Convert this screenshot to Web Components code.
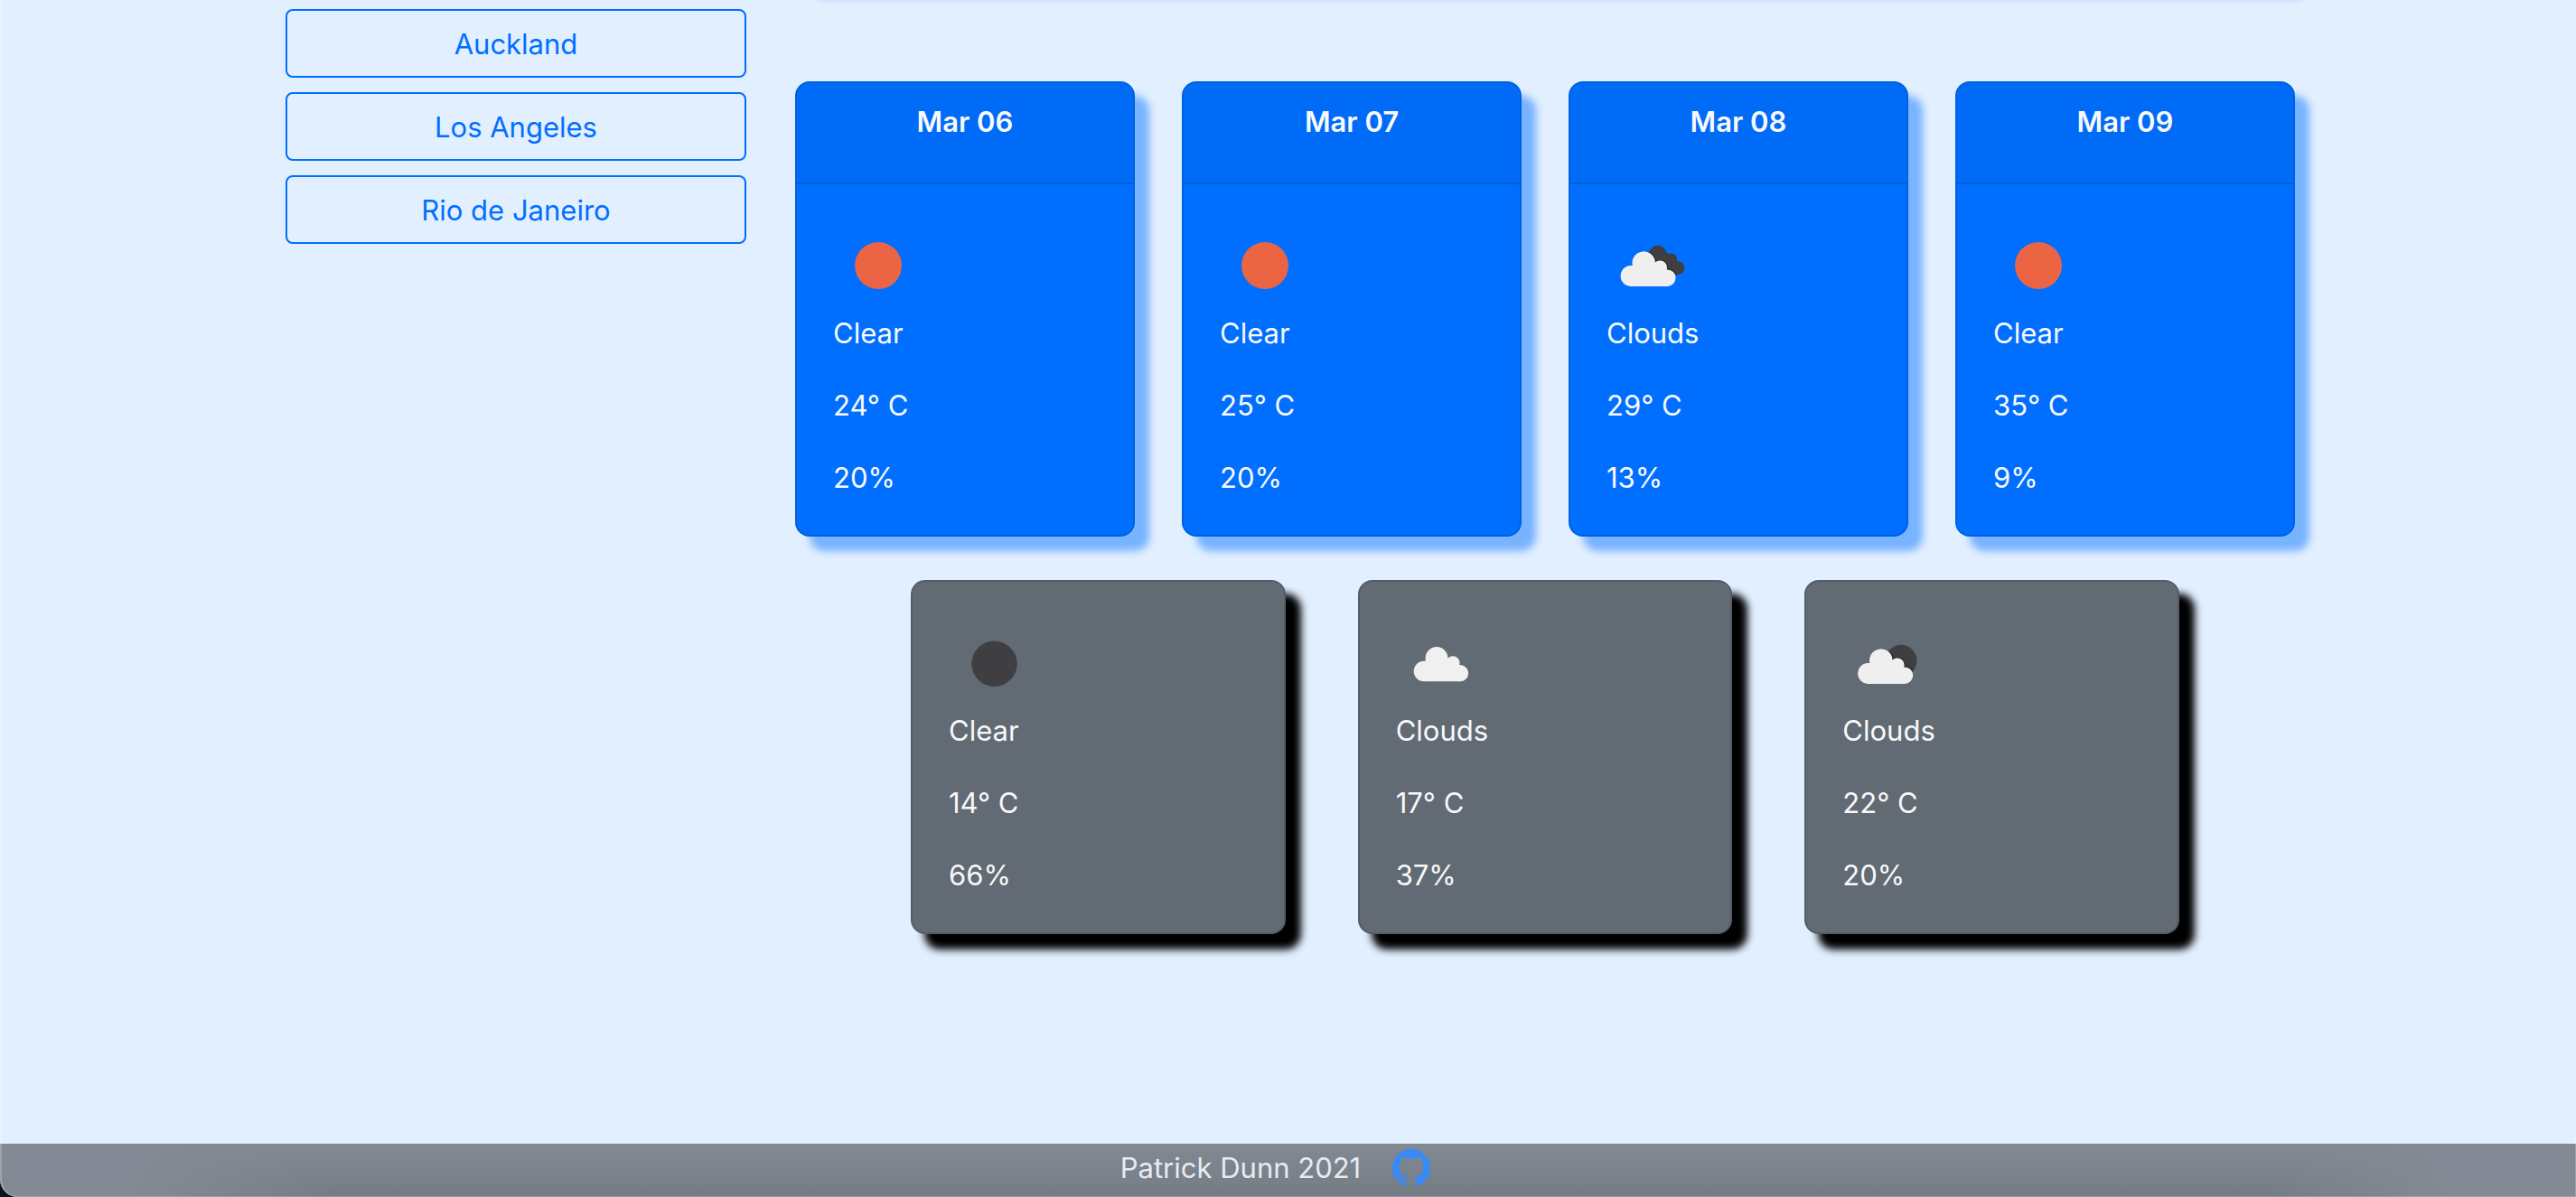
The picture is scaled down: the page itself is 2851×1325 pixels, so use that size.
<!DOCTYPE html>
<html lang="en">
<head>
<meta charset="utf-8">
<title>Weather forecast</title>
<style>
  html { background: #07131d; }
  body {
    margin: 0;
    font-family: Inter, "Liberation Sans", sans-serif;
    font-size: 31px;
    line-height: 48px;
    color: #f8f9fa;
  }
</style>
</head>
<body>
<weather-page>
  <city-list slot="cities">
    <city-button>Auckland</city-button>
    <city-button>Los Angeles</city-button>
    <city-button>Rio de Janeiro</city-button>
  </city-list>
  <current-panel></current-panel>
  <card-row>
    <weather-card heading="Mar 06" icon="sun" sky="Clear" temp="24° C" humidity="20%"></weather-card>
    <weather-card heading="Mar 07" icon="sun" sky="Clear" temp="25° C" humidity="20%"></weather-card>
    <weather-card heading="Mar 08" icon="broken" sky="Clouds" temp="29° C" humidity="13%"></weather-card>
    <weather-card heading="Mar 09" icon="sun" sky="Clear" temp="35° C" humidity="9%"></weather-card>
  </card-row>
  <card-row inset>
    <weather-card tone="night" icon="moon" sky="Clear" temp="14° C" humidity="66%"></weather-card>
    <weather-card tone="night" icon="cloud" sky="Clouds" temp="17° C" humidity="37%"></weather-card>
    <weather-card tone="night" icon="few" sky="Clouds" temp="22° C" humidity="20%"></weather-card>
  </card-row>
  <page-footer slot="footer">Patrick Dunn 2021</page-footer>
</weather-page>

<script>
const define = (name, render) => customElements.define(name, class extends HTMLElement {
  connectedCallback() {
    if (this.shadowRoot) return;
    this.attachShadow({ mode: 'open' }).innerHTML = render(this);
  }
});

define('weather-page', () => `
  <style>
    :host {
      display: flex; flex-direction: column; position: relative;
      min-height: 100vh; background: #e2efff;
      border-bottom-left-radius: 20px; overflow: hidden;
    }
    /* thin light rim of the window */
    :host::after {
      content: ""; position: absolute; inset: 0; pointer-events: none;
      border: solid rgba(255,255,255,.22); border-width: 0 1px 1px 2px;
      border-bottom-left-radius: 20px;
    }
    main { padding: 0 1px 0 2px; }
    .container {
      display: grid; grid-template-columns: 1fr 3fr;
      max-width: 2280px; margin: 0 auto;
    }
    aside { padding: 10px 30px 0; }
    section { display: flex; flex-direction: column; gap: 48px; padding: 0 26px 0 24px; min-width: 0; }
    .foot { margin-top: auto; }
  </style>
  <main><div class="container">
    <aside><slot name="cities"></slot></aside>
    <section><slot></slot></section>
  </div></main>
  <div class="foot"><slot name="footer"></slot></div>`);

define('city-list', () => `
  <style>:host { display: flex; flex-direction: column; gap: 16px; }</style>
  <slot></slot>`);

define('city-button', () => `
  <style>
    :host { display: block; }
    button {
      display: block; width: 100%; padding: 13px 24px 11px; box-sizing: border-box;
      font: inherit; color: #006fff; text-align: center;
      background: transparent; border: 2px solid #006fff; border-radius: 8px; cursor: pointer;
    }
  </style>
  <button type="button"><slot></slot></button>`);

define('current-panel', () => `
  <style>
    :host {
      display: block; height: 80px; margin: -100px 0 62px; border-radius: 16px;
      background: #006fff; box-shadow: 16px 16px 10px #78b3ff;
    }
  </style>`);

define('card-row', () => `
  <style>
    :host { display: flex; gap: 52px; }
    :host([inset]) { gap: 80px; padding: 0 128px; }
    ::slotted(*) { flex: 1 1 0; min-width: 0; }
  </style>
  <slot></slot>`);

define('weather-card', el => {
  const heading = el.getAttribute('heading');
  return `
  <style>
    :host {
      display: block; box-sizing: border-box; border-radius: 16px;
      border: 2px solid rgba(0,0,0,.125); background: #006fff;
      box-shadow: 16px 16px 8px #78b3ff;
    }
    :host([tone="night"]) { background: #626a73; box-shadow: 16px 16px 8px 1px #000; }
    header {
      padding: 24px 40px 48px; text-align: center; background: rgba(0,0,0,.03);
      border-bottom: 2px solid rgba(0,0,0,.125); border-radius: 14px 14px 0 0;
    }
    h2 { margin: 0; font-size: inherit; font-weight: 600; line-height: 38px; }
    .body { padding: 41px 40px 39px; }
    weather-icon { margin: -1px 0 1px; }
    p { margin: 0 0 32px; }
    p:last-child { margin: 0; }
  </style>
  ${heading ? `<header><h2>${heading}</h2></header>` : ''}
  <div class="body">
    <weather-icon name="${el.getAttribute('icon')}"></weather-icon>
    <p>${el.getAttribute('sky')}</p>
    <p>${el.getAttribute('temp')}</p>
    <p>${el.getAttribute('humidity')}</p>
  </div>`;
});

const cloud = `<circle cx="31" cy="59" r="11.3"/><circle cx="45" cy="44.5" r="12.4"/>
  <circle cx="63" cy="49.8" r="7.6"/><circle cx="71" cy="61.2" r="9.1"/>
  <path d="M31 70.3V48l2-.5L45 40l12.5 4.3L63 46l7 6.2 1 1v17.1z"/>`;
const layered = (back, x, y) => `
  <defs><clipPath id="back">${back}</clipPath></defs>
  <g fill="#3f3f41">${back}</g>
  <g clip-path="url(#back)"><g fill="#2c2c2f" transform="translate(${x + 1} ${y - 1})">${cloud}</g></g>
  <g fill="#fff" transform="translate(${x} ${y})">${cloud}</g>
  <g fill="#efefef" transform="translate(${x - 0.5} ${y + 0.3})">${cloud}</g>`;
const icons = {
  sun: '<circle cx="50" cy="50" r="26" fill="#eb6444"/>',
  moon: '<circle cx="50.5" cy="50.7" r="25.2" fill="#3f3f41"/>',
  cloud: `<g fill="#f0f0f0">${cloud}</g>`,
  broken: layered(`<circle cx="56.7" cy="37.3" r="9.7"/><circle cx="71.7" cy="43" r="6.4"/>
    <circle cx="78.7" cy="52.7" r="7.6"/><path d="M50 40l7-8 9 3 6 4 6 6v15.2H60z"/>`, -3.6, 2.3),
  few: layered('<circle cx="65" cy="47.3" r="17.5"/>', -2, 2.3)
};

define('weather-icon', el => `
  <style>
    :host { display: block; width: 100px; height: 100px; }
    svg { display: block; width: 100%; height: 100%; }
  </style>
  <svg viewBox="0 0 100 100" aria-hidden="true">${icons[el.getAttribute('name')]}</svg>`);

define('page-footer', () => `
  <style>
    :host { display: block; }
    footer {
      display: flex; justify-content: center; align-items: center;
      padding: 3px 0 8px; color: #e7ebf2;
      background:
        linear-gradient(90deg, #838a95 5%, transparent 13%, transparent 88%, #838a95 95%),
        linear-gradient(#828994, #747c83);
    }
    a { display: block; margin: 0 28px 0 35px; color: #378bf9; }
    svg { display: block; width: 42px; height: 42px; }
  </style>
  <footer>
    <span><slot></slot></span>
    <a href="#" aria-label="GitHub"><svg viewBox="0 0 16 16" fill="currentColor" aria-hidden="true"><path d="M8 0C3.58 0 0 3.58 0 8c0 3.54 2.29 6.53 5.47 7.59.4.07.55-.17.55-.38 0-.19-.01-.82-.01-1.49-2.01.37-2.53-.49-2.69-.94-.09-.23-.48-.94-.82-1.13-.28-.15-.68-.52-.01-.53.63-.01 1.08.58 1.23.82.72 1.21 1.87.87 2.33.66.07-.52.28-.87.51-1.07-1.78-.2-3.64-.89-3.64-3.95 0-.87.31-1.59.82-2.15-.08-.2-.36-1.02.08-2.12 0 0 .67-.21 2.2.82.64-.18 1.32-.27 2-.27s1.36.09 2 .27c1.53-1.04 2.2-.82 2.2-.82.44 1.1.16 1.92.08 2.12.51.56.82 1.27.82 2.15 0 3.07-1.87 3.75-3.65 3.95.29.25.54.73.54 1.48 0 1.07-.01 1.93-.01 2.2 0 .21.15.46.55.38A8.01 8.01 0 0 0 16 8c0-4.42-3.58-8-8-8z"/></svg></a>
  </footer>`);
</script>
</body>
</html>
